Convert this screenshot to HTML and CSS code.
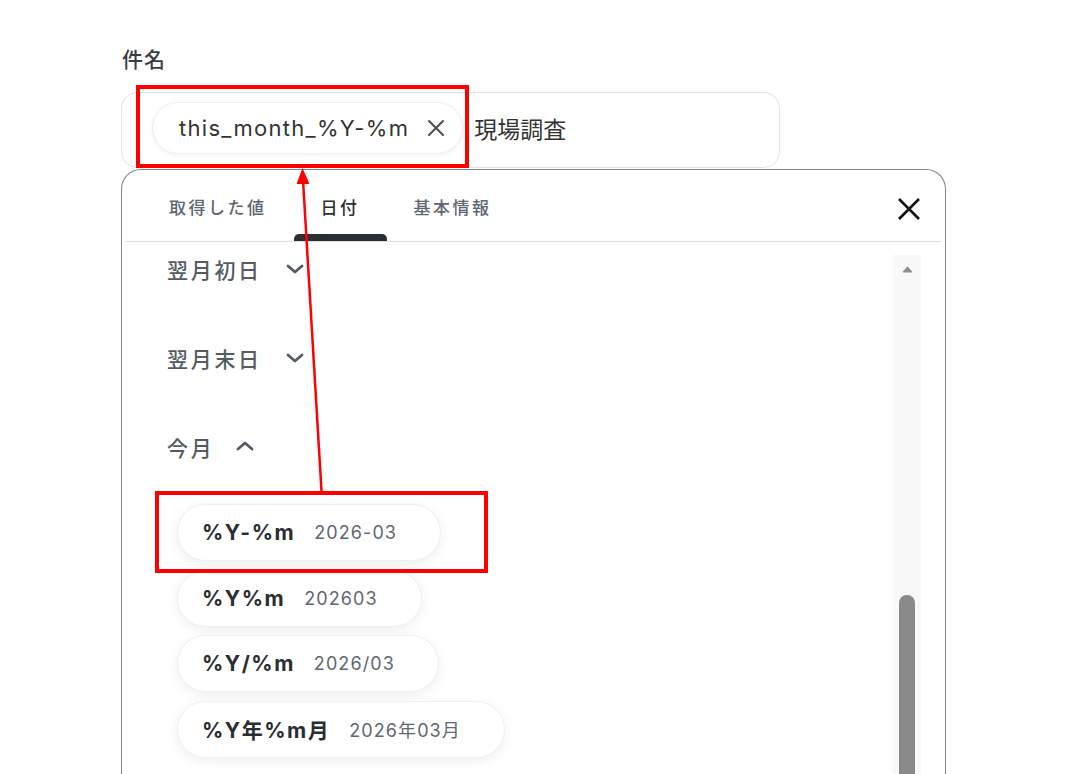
FILE: index.html
```html
<!DOCTYPE html>
<html lang="ja">
<head>
<meta charset="utf-8">
<title>件名</title>
<link rel="stylesheet" href="styles.css">
</head>
<body>
<div class="page">
  <div class="label">件名</div>
  <div class="input">
    <div class="token">
      <span class="token-text">this_month_%Y-%m</span>
      <svg class="token-x" width="18" height="18" viewBox="0 0 18 18"><path d="M2 2L16 16M16 2L2 16" stroke="#4a4f57" stroke-width="2" fill="none" stroke-linecap="round"/></svg>
    </div>
    <span class="input-text">現場調査</span>
  </div>

  <div class="panel">
    <div class="tabs">
      <div class="tab"><span class="tab-label">取得した値</span><span class="tab-bar"></span></div>
      <div class="tab active"><span class="tab-label">日付</span><span class="tab-bar"></span></div>
      <div class="tab"><span class="tab-label">基本情報</span><span class="tab-bar"></span></div>
      <svg class="close" width="24" height="24" viewBox="0 0 24 24"><path d="M2 2L22 22M22 2L2 22" stroke="#111" stroke-width="2.6" fill="none"/></svg>
    </div>
    <div class="body">
      <div class="list">
        <div class="group">
          <span class="group-title">翌月初日</span>
          <svg class="chev" width="18" height="10" viewBox="0 0 18 10"><path d="M2 2L9 8L16 2" stroke="#555b63" stroke-width="2.8" fill="none" stroke-linecap="round" stroke-linejoin="round"/></svg>
        </div>
        <div class="group">
          <span class="group-title">翌月末日</span>
          <svg class="chev" width="18" height="10" viewBox="0 0 18 10"><path d="M2 2L9 8L16 2" stroke="#555b63" stroke-width="2.8" fill="none" stroke-linecap="round" stroke-linejoin="round"/></svg>
        </div>
        <div class="group open">
          <span class="group-title">今月</span>
          <svg class="chev" width="18" height="10" viewBox="0 0 18 10"><path d="M2 8L9 2L16 8" stroke="#555b63" stroke-width="2.8" fill="none" stroke-linecap="round" stroke-linejoin="round"/></svg>
        </div>
        <div class="chips">
          <div class="chip"><span class="code">%Y-%m</span><span class="sample">2026-03</span></div>
          <div class="chip"><span class="code">%Y%m</span><span class="sample">202603</span></div>
          <div class="chip"><span class="code">%Y/%m</span><span class="sample">2026/03</span></div>
          <div class="chip"><span class="code">%Y年%m月</span><span class="sample">2026年03月</span></div>
        </div>
      </div>
      <div class="scrollbar">
        <svg class="scroll-up" width="15" height="10" viewBox="0 0 15 10"><path d="M7.5 1.5L13.5 8.5H1.5Z" fill="#8a8a8a" stroke="#8a8a8a" stroke-width="1.5" stroke-linejoin="round"/></svg>
        <div class="thumb"></div>
      </div>
    </div>
  </div>
</div>

<svg class="annot" width="1070" height="774" viewBox="0 0 1070 774">
  <rect x="138" y="87" width="329" height="79" fill="none" stroke="#ff0000" stroke-width="4"/>
  <rect x="157" y="493" width="329" height="78" fill="none" stroke="#ff0000" stroke-width="4"/>
  <line x1="321.5" y1="491" x2="303" y2="180" stroke="#ff0000" stroke-width="2.5"/>
  <path d="M302.5 168L296.5 184H309.5Z" fill="#ff0000"/>
</svg>
</body>
</html>
```
FILE: styles.css
```css
html, body {
  margin: 0;
  padding: 0;
  background: #fff;
  overflow: hidden;
  height: 774px;
}
body {
  font-family: "Inter", "Noto Sans CJK JP", sans-serif;
  color: #333;
  position: relative;
}
.page {
  padding: 44px 0 0 121px;
  width: 824px;
}
.label {
  font-family: "Noto Sans CJK JP", sans-serif;
  font-size: 21px;
  line-height: 28px;
  letter-spacing: 1px;
  color: #3a3d42;
  font-weight: 500;
  margin-bottom: 20px;
  padding-left: 1px;
}
.input {
  box-sizing: border-box;
  width: 659px;
  height: 76px;
  border: 1px solid #dfe3e8;
  border-radius: 16px;
  display: flex;
  align-items: center;
  padding: 0 0 5px 30px;
}
.token {
  box-sizing: border-box;
  height: 52px;
  border-radius: 26px;
  border: 1px solid #eceef1;
  box-shadow: 0 1px 5px rgba(0,0,0,0.06);
  display: flex;
  align-items: center;
  padding: 0 17px 0 26px;
  gap: 18px;
  background: #fff;
}
.token-text {
  font-size: 22px;
  letter-spacing: 1.3px;
  color: #333;
}
.token-x { display: block; }
.input-text {
  font-family: "Noto Sans CJK JP", sans-serif;
  font-size: 23px;
  color: #333;
  margin-left: 11px;
}
.panel {
  margin-top: 1px;
  box-sizing: border-box;
  width: 825px;
  height: 640px;
  border: 1.5px solid #7d848d;
  border-bottom: none;
  border-radius: 20px 20px 0 0;
  padding: 0 4px;
}
.tabs {
  display: flex;
  height: 71px;
  border-bottom: 1px solid #dde1e6;
  padding-left: 16px;
}
.tab {
  display: flex;
  flex-direction: column;
  padding: 0 27px;
  font-family: "Noto Sans CJK JP", sans-serif;
  font-size: 17px;
  letter-spacing: 2.5px;
  color: #5f6670;
  font-weight: 500;
}
.tab-label {
  flex: 1;
  display: flex;
  align-items: center;
  padding-top: 9px;
}
.tab-bar {
  height: 7px;
  border-radius: 5px 5px 0 0;
  margin: 0 -27px;
}
.tab.active { color: #2b2f33; }
.tab.active .tab-bar { background: #2b2f33; }
.close {
  margin-left: auto;
  margin-right: 20px;
  align-self: center;
  margin-top: 6px;
}
.body {
  display: flex;
  height: 560px;
}
.list {
  flex: 1;
  padding: 12px 0 0 41px;
}
.group {
  display: flex;
  align-items: center;
  height: 30px;
  margin-bottom: 59px;
}
.group.open { margin-bottom: 42px; }
.group-title {
  font-family: "Noto Sans CJK JP", sans-serif;
  font-size: 21px;
  letter-spacing: 2.7px;
  color: #555b63;
  font-weight: 500;
}
.chev { margin-left: 24px; }
.group.open .chev { margin-left: 22px; margin-top: -2px; }
.chips {
  display: flex;
  flex-direction: column;
  align-items: flex-start;
  gap: 8.5px;
  padding-left: 10px;
}
.chip {
  box-sizing: border-box;
  height: 57px;
  border-radius: 29px;
  border: 1px solid #eef0f3;
  box-shadow: 0 3px 12px rgba(0,0,0,0.07);
  background: #fff;
  display: flex;
  align-items: center;
  padding: 0 43px 0 24px;
  gap: 19px;
}
.code {
  font-size: 21px;
  font-weight: 700;
  letter-spacing: 1.5px;
  color: #2a2d31;
}
.sample {
  font-size: 18px;
  letter-spacing: 1.1px;
  color: #5f6670;
}
.scrollbar {
  width: 28px;
  margin: 13px 20px 0 0;
  background: #f8f8f8;
  display: flex;
  flex-direction: column;
  align-items: center;
}
.scroll-up { margin-top: 11px; }
.thumb {
  width: 16px;
  height: 300px;
  margin-top: 322px;
  background: #898989;
  border-radius: 8px;
}
.annot {
  position: absolute;
  left: 0;
  top: 0;
  pointer-events: none;
}
```
